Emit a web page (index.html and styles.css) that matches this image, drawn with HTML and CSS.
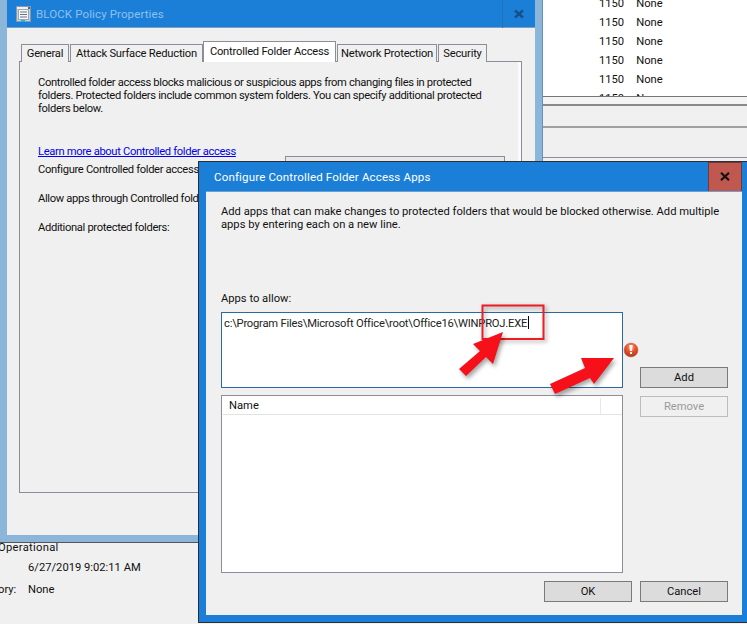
FILE: index.html
```html
<!DOCTYPE html>
<html lang="en">
<head>
<meta charset="utf-8">
<title>Configure Controlled Folder Access Apps</title>
<link rel="stylesheet" href="styles.css">
</head>
<body>
<div class="screen">
  <div class="events">
    <div class="event-rows">
      <div class="event-row"><span>1150</span><span>None</span></div>
      <div class="event-row"><span>1150</span><span>None</span></div>
      <div class="event-row"><span>1150</span><span>None</span></div>
      <div class="event-row"><span>1150</span><span>None</span></div>
      <div class="event-row"><span>1150</span><span>None</span></div>
      <div class="event-row"><span>1150</span><span>None</span></div>
    </div>
    <div class="event-band band-a"></div>
    <div class="event-band band-b"></div>
    <div class="event-band band-c"></div>
  </div>

  <div class="details">
    <div class="details-op">Operational</div>
    <div class="details-date">6/27/2019 9:02:11 AM</div>
    <div class="details-row"><span class="details-label">ory:</span><span>None</span></div>
  </div>

  <section class="window back-window">
    <header class="titlebar back-title">
      <svg class="policy-icon" width="15" height="16" viewBox="0 0 15 16">
        <rect x="0.5" y="0.5" width="14" height="15" fill="#c9d2da" stroke="#8a99a8"/>
        <rect x="1" y="1" width="13" height="2" fill="#eef1f4"/>
        <rect x="12" y="1" width="2" height="2" fill="#5b6672"/>
        <rect x="2.500" y="3.500" width="10" height="10" fill="#f7f8f9" stroke="#9aa7b3"/>
        <path d="M4 6h7M4 8.500h7M4 11h7" stroke="#66737f" stroke-width="1"/>
        <rect x="5" y="14" width="4" height="2" fill="#29b0e0"/>
      </svg>
      <span class="back-title-text">BLOCK Policy Properties</span>
      <span class="back-close">
        <svg width="10" height="10" viewBox="0 0 10 10"><path d="M1 1.500L9 8.500M9 1.500L1 8.500" stroke="#14508a" stroke-width="2.400"/></svg>
      </span>
    </header>
    <div class="back-body">
      <div class="tabs">
        <span class="tab tab-general">General</span>
        <span class="tab tab-asr">Attack Surface Reduction</span>
        <span class="tab tab-active">Controlled Folder Access</span>
        <span class="tab tab-net">Network Protection</span>
        <span class="tab tab-sec">Security</span>
      </div>
      <div class="pane">
        <p class="pane-intro">Controlled folder access blocks malicious or suspicious apps from changing files in protected<br>folders. Protected folders include common system folders. You can specify additional protected<br>folders below.</p>
        <a class="pane-link" href="#">Learn more about Controlled folder access</a>
        <div class="pane-row row-config">Configure Controlled folder access:<span class="pane-select"></span></div>
        <div class="pane-row row-allow">Allow apps through Controlled folder access:</div>
        <div class="pane-row row-folders">Additional protected folders:</div>
      </div>
    </div>
  </section>

  <section class="window dialog">
    <header class="titlebar dialog-title">
      <span class="dialog-title-text">Configure Controlled Folder Access Apps</span>
      <span class="dialog-close">
        <svg width="10" height="9" viewBox="0 0 10 9"><path d="M1 .8L9 8.200M9 .8L1 8.200" stroke="#111" stroke-width="2.200"/></svg>
      </span>
    </header>
    <div class="dialog-body">
      <p class="dialog-intro">Add apps that can make changes to protected folders that would be blocked otherwise. Add multiple<br>apps by entering each on a new line.</p>
      <div class="apps-label">Apps to allow:</div>
      <div class="dialog-grid">
        <div class="left-col">
          <div class="apps-input">c:\Program Files\Microsoft Office\root\Office16\WINPROJ.EXE<span class="caret"></span></div>
          <div class="apps-list">
            <div class="list-head"><span class="list-name">Name</span><span class="list-end"></span></div>
          </div>
        </div>
        <div class="side-col">
          <button class="btn">Add</button>
          <button class="btn btn-off">Remove</button>
        </div>
      </div>
      <div class="dialog-foot">
        <button class="btn">OK</button>
        <button class="btn">Cancel</button>
      </div>
    </div>
  </section>

  <svg class="markup" width="747" height="624" viewBox="0 0 747 624">
    <defs>
      <radialGradient id="warn" cx="50%" cy="30%" r="70%">
        <stop offset="0" stop-color="#f9a184"/>
        <stop offset="0.55" stop-color="#ea4a22"/>
        <stop offset="1" stop-color="#a93a1a"/>
      </radialGradient>
    </defs>
    <rect class="mark-box" x="482.500" y="305.500" width="61" height="33.500"/>
    <path class="mark-arrow" d="M503 332L473 344L480 351L459 369L466 376L486 357L493 364Z"/>
    <path class="mark-arrow" d="M614 358L581 358L585 368L550 384L555 394L590 378L594 384Z"/>
    <circle cx="631" cy="350" r="7" fill="url(#warn)" stroke="#c0694e" stroke-width="0.500"/>
    <path d="M629.300 345h3.400l-.7 6h-2z" fill="#fff"/>
    <rect x="630" y="352" width="2" height="2" fill="#fff"/>
  </svg>
</div>
</body>
</html>
```
FILE: styles.css
```css
* { box-sizing: border-box; }
html, body { margin: 0; padding: 0; background: #f0f0f0; }
body { font-family: Roboto, "Liberation Sans", sans-serif; font-size: 11.2px; color: #111; }
.screen { position: relative; width: 747px; height: 624px; overflow: hidden; background: #f0f0f0; }

/* background event viewer */
.events { position: absolute; left: 543px; top: 0; right: 0; height: 160px; }
.event-rows { height: 97px; overflow: hidden; background: #fff; padding: 0 0 0 56px; border-bottom: 1px solid #777; }
.event-row { display: flex; gap: 12px; height: 19px; line-height: 19px; position: relative; top: -6px; }
.event-band { background: #f0f0f0; }
.band-a { height: 9px; border-bottom: 2px solid #8a8a8a; background: #f4f4f4; }
.band-b { height: 22px; border-bottom: 2px solid #a0a0a0; }
.band-c { height: 30px; border-bottom: 1px solid #8d8d99; }

.details { position: absolute; left: 0; top: 538px; width: 198px; }
.details-op { margin-left: -2px; height: 20px; line-height: 20px; letter-spacing: .3px; }
.details-date { margin-left: 28px; height: 20px; line-height: 20px; }
.details-row { display: flex; height: 24px; line-height: 24px; margin-left: -2px; }
.details-label { width: 30px; }

/* windows */
.window { position: absolute; display: flex; flex-direction: column; }
.titlebar { display: flex; align-items: center; flex: none; }

.back-window { left: 0; top: 0; width: 543px; height: 543px; background: #8bb6da; padding: 0 7px 7px; border-bottom: 1px solid #555; border-right: 1px solid #5f93c4; }
.back-title { height: 28px; background: #1b7fd8; border-bottom: 1px solid #7f9fc0; padding-left: 9px; }
.policy-icon { flex: none; }
.back-title-text { margin-left: 5px; flex: 1; color: #8dc0ee; font-size: 11.5px; letter-spacing: .12px; }
.back-close { width: 33px; height: 28px; border-left: 1px solid #2a6fb0; display: flex; align-items: center; justify-content: center; }
.back-body { flex: 1; background: #f0f0f0; padding: 13px 12px 0; height: 507px; }

.tabs { display: flex; align-items: flex-end; height: 21px; padding-left: 2px; margin-bottom: -1px; position: relative; z-index: 1; letter-spacing: -.22px; }
.tab { height: 18px; line-height: 17px; border: 1px solid #8d8d99; border-bottom: 0; text-align: center; background: #f0f0f0; margin-right: 1px; white-space: nowrap; }
.tab-general { width: 48px; }
.tab-asr { width: 133px; margin-right: 0; }
.tab-active { width: 133px; height: 21px; line-height: 20px; background: #fff; margin-right: 1px; }
.tab-net { width: 100px; }
.tab-sec { width: 49px; }

.pane { width: 503px; height: 432px; border: 1px solid #8d8d99; background: #f0f0f0; padding: 14px 18px 0; box-shadow: inset -3px 0 0 #fbfbfb; letter-spacing: -.34px; }
.pane p { margin: 0; }
.pane-intro { line-height: 13px; height: 69px; }
.pane-link { display: block; color: #0000ee; line-height: 14px; height: 14px; }
.pane-row { line-height: 14px; }
.row-config { margin-top: 4px; position: relative; }
.pane-select { position: absolute; left: 247px; top: -7px; width: 220px; height: 21px; border: 1px solid #8d8d99; background: #e8e8e8; }
.row-allow { margin-top: 15px; }
.row-folders { margin-top: 15px; }

.dialog { left: 198px; top: 161px; width: 549px; height: 462px; background: #1b7fd8; border: 1px solid #2b2f36; border-right: 0; padding: 0 5px 7px 7px; }
.dialog-title { height: 29px; }
.dialog-title-text { flex: 1; margin-left: 8px; color: #fff; font-size: 11.5px; letter-spacing: .17px; }
.dialog-close { width: 34px; height: 30px; background: #c0584f; border: 1px solid #6f3a38; display: flex; align-items: center; justify-content: center; }
.dialog-body { flex: 1; background: #f0f0f0; padding: 13px 13px 13px 15px; display: flex; flex-direction: column; border-top: 1px solid #6aa0d4; }
.dialog-intro { margin: 0; line-height: 13px; height: 26px; }
.apps-label { margin-top: 61px; line-height: 14px; height: 14px; }
.dialog-grid { display: flex; gap: 17px; margin-top: 6px; flex: none; }
.left-col { width: 402px; display: flex; flex-direction: column; gap: 7px; }
.apps-input { height: 76px; border: 1px solid #2c6a9e; background: #fff; padding: 3px 2px; line-height: 14px; white-space: nowrap; color: #222; letter-spacing: -.21px; }
.caret { display: inline-block; width: 1px; height: 13px; background: #000; vertical-align: -2px; margin-left: 1px; }
.apps-list { height: 178px; border: 1px solid #8d8d99; background: #fff; padding: 2px 0 0 1px; }
.list-head { display: flex; height: 17px; border-bottom: 1px solid #e2e2e2; line-height: 16px; }
.list-name { width: 378px; padding-left: 6px; border-right: 1px solid #e8e8e8; }
.list-end { flex: 1; }
.side-col { display: flex; flex-direction: column; padding-top: 55px; gap: 8px; }
.btn { width: 88px; height: 21px; padding: 1px 0 0; font: inherit; background: #dcdcdc; border: 1px solid #7a7a7a; color: #111; line-height: 18px; display: block; }
.btn-off { background: #f0f0f0; border-color: #bcbcbc; color: #9a9a9a; }
.dialog-foot { display: flex; justify-content: flex-end; gap: 8px; margin-top: 8px; padding-right: 1px; }

/* annotations */
.markup { position: absolute; left: 0; top: 0; pointer-events: none; }
.mark-box { fill: none; stroke: #ee1c25; stroke-width: 2; filter: drop-shadow(2px 2px 2px rgba(0,0,0,.35)); }
.mark-arrow { fill: #f5101a; filter: drop-shadow(2px 3px 2px rgba(0,0,0,.35)); }
```
